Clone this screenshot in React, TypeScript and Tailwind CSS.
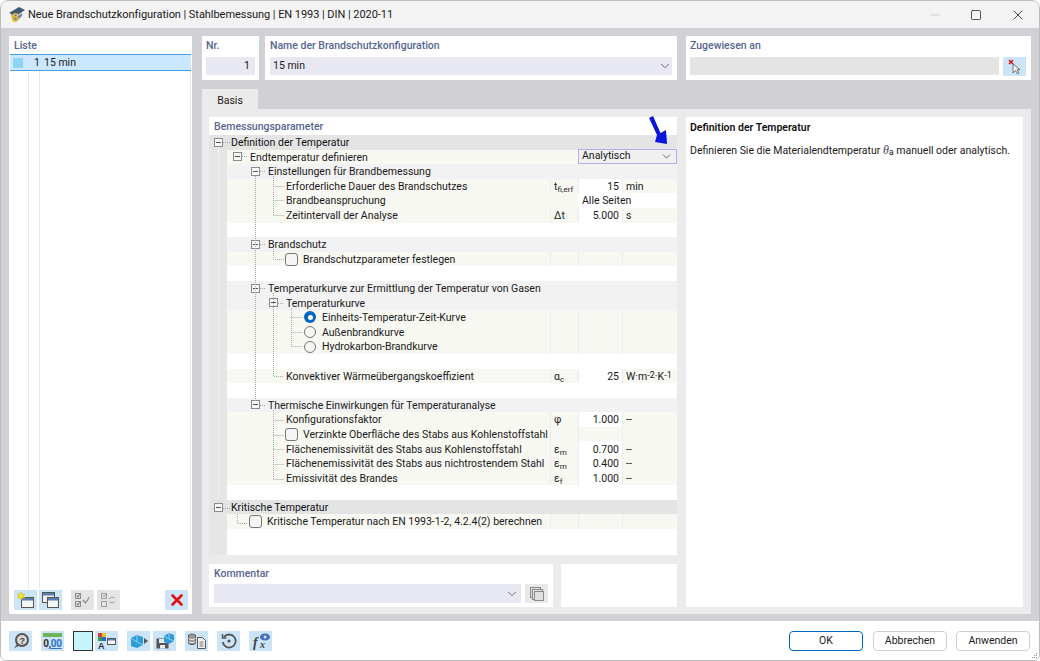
import { FC, ReactNode } from "react";
import { ChevronDown, Minus, Square, X } from "lucide-react";

const Box: FC = () => (
    <span className="w-[9px] h-[9px] shrink-0 border border-[#8a8a8a] bg-[#f6f6f6] flex items-center justify-center">
        <span className="w-[5px] h-px bg-[#555555]" />
    </span>
);

const Check: FC = () => (
    <span className="w-[13px] h-[13px] shrink-0 rounded-[3px] border border-[#767676] bg-[#f5f5f5]" />
);

const Radio: FC<{ on?: boolean }> = ({ on }) =>
    on ? (
        <span className="w-[12px] h-[12px] shrink-0 rounded-full bg-[#0067c0] flex items-center justify-center">
            <span className="w-[5px] h-[5px] rounded-full bg-white" />
        </span>
    ) : (
        <span className="w-[12px] h-[12px] shrink-0 rounded-full border border-[#767676] bg-[#f5f5f5]" />
    );

type RowProps = {
    pad: string;
    box?: boolean;
    check?: boolean;
    radio?: "on" | "off";
    label: string;
    tone: "cream" | "head" | "blank";
    sym?: ReactNode;
    value?: string;
    unit?: ReactNode;
    cells?: boolean;
};

const Row: FC<RowProps> = ({ pad, box, check, radio, label, tone, sym, value, unit, cells }) => {
    const bg = tone === "cream" ? "bg-[#f8f8f3]" : tone === "head" ? "bg-[#f2f2f2]" : "bg-white";
    return (
        <div className="flex h-[14.6px] shrink-0 leading-none">
            <div className="w-[18px] shrink-0 bg-[#e6e6e6]" />
            <div className={`flex-1 flex min-w-0 ${bg}`}>
                <div className={`flex-1 flex items-center min-w-0 whitespace-nowrap ${pad}`}>
                    {box && <Box />}
                    {check && <Check />}
                    {radio && <Radio on={radio === "on"} />}
                    <span className={`block pt-[2px] ${box ? "ml-[8px]" : check ? "ml-[5px]" : radio ? "ml-[6px]" : ""}`}>{label}</span>
                </div>
                {cells && (
                    <>
                        <div className="w-[28px] shrink-0 border-l border-[#ececec] pl-[3px] pt-[2px] flex items-center">{sym}</div>
                        <div className={`w-[44px] shrink-0 border-l border-[#ececec] pr-[3px] pt-[2px] flex items-center justify-end ${value ? "bg-white" : ""}`}>
                            {value}
                        </div>
                        <div className="w-[55px] shrink-0 border-l border-[#ececec] pl-[3px] pt-[2px] flex items-center">{unit}</div>
                    </>
                )}
            </div>
        </div>
    );
};

const Group: FC<{ label: string }> = ({ label }) => (
    <div className="flex h-[14.6px] shrink-0 items-center bg-[#e4e4e4] pl-[5px] leading-none text-[#111111]">
        <Box />
        <span className="block pt-[2px] ml-[8px]">{label}</span>
    </div>
);

const Sym: FC<{ b: string; s?: string }> = ({ b, s }) => (
    <span className="whitespace-nowrap text-[#222222]">
        {b}
        {s && <span className="relative top-[2px] text-[8px]">{s}</span>}
    </span>
);

const Dots: FC = () => (
    <svg className="absolute left-0 top-0 pointer-events-none" width="468" height="420" fill="none" stroke="#a8a8a8" strokeDasharray="1 1">
        <path d="M9.5 12V363" stroke="#f8f8f8" />
        <path d="M14 7.5H21M33 21.5H39M51 36.5H57M51 109.5H57M51 153.5H57M69 168.5H75M51 270.5H57M14 373.5H21" />
        <path d="M46.5 41V266" />
        <path d="M64.5 41V80.5M64.5 51.5H75M64.5 65.5H75M64.5 80.5H75" />
        <path d="M64.5 114V124.5H75" />
        <path d="M64.5 158V241.5H75" />
        <path d="M82.5 173V211.5M82.5 182.5H94M82.5 197.5H94M82.5 211.5H94" />
        <path d="M64.5 275V344.5M64.5 285.5H75M64.5 300.5H75M64.5 314.5H75M64.5 329.5H75M64.5 344.5H75" />
        <path d="M28.5 379V388.5H39" />
    </svg>
);

const TBtn: FC<{ children: ReactNode; off?: boolean; cls?: string }> = ({ children, off, cls }) => (
    <div className={`w-[23px] h-[20px] shrink-0 flex items-center justify-center ${off ? "bg-[#e4e4e4]" : "bg-[#cce4f7]"} ${cls ?? ""}`}>
        {children}
    </div>
);

const NewIcon: FC = () => (
    <svg width="19" height="18" viewBox="0 0 19 18">
        <rect x="5.5" y="6.5" width="12" height="10" fill="#f4f4f4" stroke="#555" />
        <rect x="6" y="7" width="11" height="2.5" fill="#5a7fb5" />
        <path d="M5 1l1 2.5 2.6-.6-1.4 2.2 1.8 1.9-2.6-.3L5 9 3.9 6.700l-2.600.3 1.800-1.900L1.700 2.900l2.300.6z" fill="#f7e62c" stroke="#c8b400" strokeWidth=".5" />
    </svg>
);

const CopyWinIcon: FC = () => (
    <svg width="19" height="18" viewBox="0 0 19 18">
        <rect x="1.5" y="1.5" width="12" height="10" fill="#f0f0f0" stroke="#555" />
        <rect x="2" y="2" width="11" height="2.5" fill="#5a7fb5" />
        <rect x="6.5" y="6.5" width="11" height="10" fill="#f4f4f4" stroke="#555" />
        <rect x="7" y="7" width="10" height="2.5" fill="#5a7fb5" />
    </svg>
);

const CheckAllIcon: FC = () => (
    <svg width="19" height="18" viewBox="0 0 19 18" fill="none" stroke="#8c8c8c">
        <rect x="2.5" y="2.5" width="5" height="5" />
        <rect x="2.5" y="10.5" width="5" height="5" />
        <path d="M3.500 12.500l1.500 1.500 2-3M3.500 4.500l1.500 1.500 2-3M10 9l2.500 3 4-6" strokeWidth="1.2" />
    </svg>
);

const CheckSwapIcon: FC = () => (
    <svg width="19" height="18" viewBox="0 0 19 18" fill="none" stroke="#a0a0a0">
        <rect x="2.5" y="2.5" width="5" height="5" />
        <rect x="2.5" y="10.5" width="5" height="5" />
        <path d="M3.500 4.500l1.500 1.500 2-3M10 8c1-2 4-2 6-1M16 11c-2 1-4 1-6 0" />
    </svg>
);

const HelpIcon: FC = () => (
    <svg width="20" height="18" viewBox="0 0 20 18">
        <circle cx="11" cy="8" r="6" fill="#d8d8d8" stroke="#555" strokeWidth="2" />
        <path d="M6 12l-3 4 5-2" fill="#555" />
        <text x="8.500" y="11.500" fontSize="9" fontWeight="700" fill="#444" fontFamily="Liberation Sans, sans-serif">?</text>
    </svg>
);

const NumIcon: FC = () => (
    <div className="flex flex-col items-center leading-none">
        <div className="w-[19px] h-[4px] bg-[#71b35a] mb-[1px]" />
        <div className="text-[10px] font-bold leading-[11px] tracking-[-0.3px]">
            <span className="text-[#333333]">0,</span>
            <span className="text-[#2a6fc9] underline">00</span>
        </div>
    </div>
);

const LabelsIcon: FC = () => (
    <svg width="21" height="18" viewBox="0 0 21 18">
        <rect x="2" y="1" width="4" height="4" fill="#d93a3a" />
        <rect x="6" y="1" width="4" height="4" fill="#e8c52c" />
        <rect x="2" y="5" width="4" height="4" fill="#3a9b46" />
        <rect x="6" y="5" width="4" height="4" fill="#2c63c9" />
        <text x="2" y="17" fontSize="9" fontWeight="700" fill="#333" fontFamily="Liberation Sans, sans-serif">A</text>
        <rect x="11.5" y="6.5" width="8" height="6" fill="#f4f4f4" stroke="#555" />
        <rect x="12" y="7" width="7" height="1.5" fill="#5a7fb5" />
    </svg>
);

const CubeArrowIcon: FC = () => (
    <svg width="20" height="18" viewBox="0 0 20 18">
        <path d="M2 6l6-3 6 2v8l-6 3-6-2z" fill="#2f9bd6" />
        <path d="M8 3v7l6 3M2 6l6 4" fill="none" stroke="#8fd0ef" />
        <path d="M15 6l4 3-4 3z" fill="#555" />
    </svg>
);

const SaveIcon: FC = () => (
    <svg width="20" height="18" viewBox="0 0 20 18">
        <path d="M1.5 6.5h11l1 1v9h-12z" fill="#555" />
        <rect x="4" y="7" width="7" height="4" fill="#e8e8e8" />
        <rect x="5" y="13" width="5" height="3.5" fill="#e8e8e8" />
        <path d="M9 4l5-3 5 2v6l-5 3-5-2z" fill="#2f9bd6" />
        <path d="M14 1v6l5 2M9 4l5 3" fill="none" stroke="#8fd0ef" />
    </svg>
);

const DbDocIcon: FC = () => (
    <svg width="20" height="18" viewBox="0 0 20 18">
        <ellipse cx="5" cy="3" rx="3.5" ry="1.5" fill="#777" />
        <path d="M1.5 3v8c0 2 7 2 7 0V3" fill="#999" stroke="#555" />
        <path d="M1.5 6c0 2 7 2 7 0M1.5 9c0 2 7 2 7 0" fill="none" stroke="#eee" />
        <path d="M10.5 5.5h5l3 3v8h-8z" fill="#f4f4f4" stroke="#555" />
        <path d="M12.5 10h4M12.5 12h4M12.5 14h4" stroke="#777" />
    </svg>
);

const ResetIcon: FC = () => (
    <svg width="18" height="18" viewBox="0 0 18 18" fill="none" stroke="#555" strokeWidth="1.8">
        <path d="M4 5a6.5 6.5 0 1 1-1.300 5" />
        <path d="M2.5 2v4h4" strokeWidth="1.5" />
        <circle cx="9" cy="9" r="1.6" fill="#555" stroke="none" />
    </svg>
);

const FormulaIcon: FC = () => (
    <svg width="20" height="18" viewBox="0 0 20 18">
        <text x="2" y="15" fontSize="14" fontStyle="italic" fontWeight="700" fill="#444" fontFamily="Liberation Serif, serif">f</text>
        <text x="9" y="16" fontSize="10" fontStyle="italic" fontWeight="700" fill="#444" fontFamily="Liberation Serif, serif">x</text>
        <ellipse cx="14" cy="5" rx="5" ry="3.5" fill="#3f6fc4" />
        <circle cx="14" cy="5" r="1.5" fill="#dfe9f7" />
    </svg>
);

const Btn: FC<{ label: string; primary?: boolean }> = ({ label, primary }) => (
    <div className={`w-[74px] h-[20px] rounded-[4px] border bg-white flex items-center justify-center ${primary ? "border-[#0067c0] mr-px" : "border-[#d0d0d0]"}`}>
        {label}
    </div>
);

const PanelTitle: FC<{ children: ReactNode }> = ({ children }) => (
    <div className="h-[18px] text-[#56658f] font-medium leading-[20px]">{children}</div>
);

export default function App() {
    return (
        <div
            className="relative w-[1040px] h-[661px] flex flex-col overflow-hidden rounded-t-[8px] rounded-b-[6px] border border-[#bdbdbd] bg-white text-[10.5px] text-[#1a1a1a]"
            style={{ fontFamily: "Roboto, sans-serif" }}
        >
            {/* title bar */}
            <div className="h-[27px] shrink-0 flex items-center bg-[#f3f3f3] pl-[7px]">
                <svg width="18" height="18" viewBox="0 0 18 18">
                    <path d="M1 7l10-6 6 3-9 6z" fill="#3f5873" />
                    <path d="M3 8l5 3 6-4v3l-4 4H5z" fill="#74879b" />
                    <text x="3.5" y="15.5" fontSize="13" fontWeight="700" fill="#e8b923" fontFamily="Liberation Sans, sans-serif">6</text>
                </svg>
                <span className="ml-[2px] text-[11px] tracking-[-0.05px] pt-px">Neue Brandschutzkonfiguration | Stahlbemessung | EN 1993 | DIN | 2020-11</span>
                <div className="ml-auto flex items-center gap-[28px] pr-[13px]">
                    <Minus size={14} strokeWidth={1} className="text-[#b8b8b8]" />
                    <Square size={12} strokeWidth={1.5} className="text-[#222222]" />
                    <X size={16} strokeWidth={1.2} className="text-[#222222]" />
                </div>
            </div>

            {/* main */}
            <div className="flex-1 min-h-0 flex gap-[10px] bg-[#d0d0d5] pt-[8px] pb-[7px] pl-[8px] pr-[8px]">
                {/* list */}
                <div className="w-[183px] shrink-0 flex flex-col bg-white">
                    <div className="pl-[5px]">
                        <PanelTitle>Liste</PanelTitle>
                    </div>
                    <div className="ml-px mr-[1px] h-[17px] flex items-center bg-[#cce8ff] border-y border-[#4a9fe0] pt-px">
                        <div className="w-[19px] pl-[3px]">
                            <div className="w-[10px] h-[10px] bg-[#8dd4f5]" />
                        </div>
                        <div className="w-[11px] text-right">1</div>
                        <div className="pl-[4px]">15 min</div>
                    </div>
                    <div className="ml-px mr-[1px] flex-1 flex border-r border-[#e8e8e8]">
                        <div className="w-[19px] border-r border-[#e8e8e8]" />
                        <div className="w-[11px] border-r border-[#e8e8e8]" />
                    </div>
                    <div className="flex items-center h-[26px] pl-[5px] pr-[4px] pb-[3px]">
                        <TBtn><NewIcon /></TBtn>
                        <TBtn cls="ml-[2px]"><CopyWinIcon /></TBtn>
                        <TBtn off cls="ml-[9px]"><CheckAllIcon /></TBtn>
                        <TBtn off cls="ml-[3px]"><CheckSwapIcon /></TBtn>
                        <TBtn cls="ml-auto"><X size={18} strokeWidth={3.5} className="text-[#e01010]" /></TBtn>
                    </div>
                </div>

                {/* right column */}
                <div className="flex-1 min-w-0 flex flex-col">
                    <div className="h-[44px] shrink-0 flex">
                        <div className="w-[57px] bg-white px-[4px]">
                            <PanelTitle>Nr.</PanelTitle>
                            <div className="h-[18px] mt-[3px] bg-[#e8e8f2] flex items-center justify-end pr-[5px]">1</div>
                        </div>
                        <div className="w-[412px] ml-[6px] bg-white px-[5px]">
                            <PanelTitle>Name der Brandschutzkonfiguration</PanelTitle>
                            <div className="h-[18px] mt-[3px] bg-[#e8e8f2] flex items-center justify-between pl-[3px]">
                                <span>15 min</span>
                                <ChevronDown size={14} strokeWidth={1.3} className="text-[#444444]" />
                            </div>
                        </div>
                        <div className="flex-1 ml-[9px] bg-white pl-[4px] pr-[5px]">
                            <PanelTitle>Zugewiesen an</PanelTitle>
                            <div className="mt-[3px] flex gap-[4px]">
                                <div className="flex-1 h-[18px] bg-[#e4e4e4]" />
                                <div className="w-[23px] h-[19px] bg-[#cce4f7] flex items-center justify-center">
                                    <svg width="16" height="16" viewBox="0 0 16 16">
                                        <path d="M6 5v9l2.500-2.500 2 3.500 1.500-1-2-3.300H13z" fill="#f4f4f4" stroke="#555" strokeWidth=".8" />
                                        <path d="M2 1l4 4M6 1L2 5" stroke="#e01010" strokeWidth="1.5" />
                                    </svg>
                                </div>
                            </div>
                        </div>
                    </div>

                    <div className="mt-[9px] w-[56px] h-[20px] shrink-0 bg-[#ebebeb] flex items-center justify-center pt-[3px]">Basis</div>

                    <div className="flex-1 min-h-0 flex gap-[9px] bg-[#ebebeb] pt-[8px] pb-[7px] pl-[7px] pr-[8px]">
                        <div className="w-[468px] shrink-0 flex flex-col">
                            <div className="h-[438px] shrink-0 flex flex-col bg-white">
                                <div className="h-[18px] shrink-0 pl-[5px]">
                                    <PanelTitle>Bemessungsparameter</PanelTitle>
                                </div>
                                <div className="relative flex-1 min-h-0 flex flex-col">
                                    <Group label="Definition der Temperatur" />
                                    <div className="relative">
                                        <Row pad="pl-[6px]" box label="Endtemperatur definieren" tone="cream" />
                                        <div className="absolute right-0 top-[-1px] w-[99px] h-[15px] bg-[#f0f0f0] border border-[#b0b0ee] flex items-center justify-between pl-[3px] pr-[3px]">
                                            <span>Analytisch</span>
                                            <ChevronDown size={13} strokeWidth={1.4} className="text-[#444444]" />
                                        </div>
                                    </div>
                                    <Row pad="pl-[24px]" box label="Einstellungen für Brandbemessung" tone="head" />
                                    <Row pad="pl-[59px]" label="Erforderliche Dauer des Brandschutzes" tone="cream" cells sym={<Sym b="t" s="fi,erf" />} value="15" unit="min" />
                                    <div className="flex h-[14.6px] shrink-0 leading-none">
                                        <div className="w-[18px] shrink-0 bg-[#e6e6e6]" />
                                        <div className="flex-1 flex items-center bg-[#f8f8f3] pl-[59px] pt-[2px]">Brandbeanspruchung</div>
                                        <div className="w-[99px] shrink-0 bg-white pl-[4px] pt-[2px] flex items-center">Alle Seiten</div>
                                    </div>
                                    <Row pad="pl-[59px]" label="Zeitintervall der Analyse" tone="cream" cells sym={<Sym b="Δt" />} value="5.000" unit="s" />
                                    <Row pad="" label="" tone="blank" />
                                    <Row pad="pl-[24px]" box label="Brandschutz" tone="head" />
                                    <Row pad="pl-[58px]" check label="Brandschutzparameter festlegen" tone="cream" cells />
                                    <Row pad="" label="" tone="blank" />
                                    <Row pad="pl-[24px]" box label="Temperaturkurve zur Ermittlung der Temperatur von Gasen" tone="head" />
                                    <Row pad="pl-[42px]" box label="Temperaturkurve" tone="head" />
                                    <Row pad="pl-[77px]" radio="on" label="Einheits-Temperatur-Zeit-Kurve" tone="cream" cells />
                                    <Row pad="pl-[77px]" radio="off" label="Außenbrandkurve" tone="cream" cells />
                                    <Row pad="pl-[77px]" radio="off" label="Hydrokarbon-Brandkurve" tone="cream" cells />
                                    <Row pad="" label="" tone="blank" />
                                    <Row
                                        pad="pl-[59px]"
                                        label="Konvektiver Wärmeübergangskoeffizient"
                                        tone="cream"
                                        cells
                                        sym={<Sym b="α" s="c" />}
                                        value="25"
                                        unit={
                                            <span className="whitespace-nowrap">
                                                W·m<span className="relative top-[-2px] text-[9px]">-2</span>·K<span className="relative top-[-2px] text-[9px]">-1</span>
                                            </span>
                                        }
                                    />
                                    <Row pad="" label="" tone="blank" />
                                    <Row pad="pl-[24px]" box label="Thermische Einwirkungen für Temperaturanalyse" tone="head" />
                                    <Row pad="pl-[59px]" label="Konfigurationsfaktor" tone="cream" cells sym={<Sym b="φ" />} value="1.000" unit="--" />
                                    <Row pad="pl-[58px]" check label="Verzinkte Oberfläche des Stabs aus Kohlenstoffstahl" tone="cream" cells />
                                    <Row pad="pl-[59px]" label="Flächenemissivität des Stabs aus Kohlenstoffstahl" tone="cream" cells sym={<Sym b="ε" s="m" />} value="0.700" unit="--" />
                                    <Row pad="pl-[59px]" label="Flächenemissivität des Stabs aus nichtrostendem Stahl" tone="cream" cells sym={<Sym b="ε" s="m" />} value="0.400" unit="--" />
                                    <Row pad="pl-[59px]" label="Emissivität des Brandes" tone="cream" cells sym={<Sym b="ε" s="f" />} value="1.000" unit="--" />
                                    <Row pad="" label="" tone="blank" />
                                    <Group label="Kritische Temperatur" />
                                    <Row pad="pl-[22px]" check label="Kritische Temperatur nach EN 1993-1-2, 4.2.4(2) berechnen" tone="cream" cells />
                                    <div className="flex-1 flex">
                                        <div className="w-[18px] bg-[#e6e6e6]" />
                                    </div>
                                    <Dots />
                                    <svg className="absolute left-[438px] top-[-21px] pointer-events-none" width="24" height="36" viewBox="0 0 24 36">
                                        <path d="M2 4L6 2L13.5 19L19 16L20 30L8 28L10 21Z" fill="#0a14dc" />
                                    </svg>
                                </div>
                            </div>
                            <div className="mt-[9px] flex-1 flex gap-[8px]">
                                <div className="w-[344px] bg-white px-[5px]">
                                    <PanelTitle>Kommentar</PanelTitle>
                                    <div className="mt-[2px] flex gap-[4px]">
                                        <div className="flex-1 h-[19px] bg-[#e8e8f2] flex items-center justify-end pr-[2px]">
                                            <ChevronDown size={14} strokeWidth={1.3} className="text-[#444444]" />
                                        </div>
                                        <div className="w-[23px] h-[19px] bg-[#e8e8e8] flex items-center justify-center">
                                            <svg width="16" height="16" viewBox="0 0 16 16" fill="#e0e0e0" stroke="#8a8a8a">
                                                <rect x="1.5" y="1.5" width="10" height="10" />
                                                <rect x="3.5" y="3.5" width="10" height="10" />
                                                <rect x="5.5" y="5.5" width="9" height="9" />
                                            </svg>
                                        </div>
                                    </div>
                                </div>
                                <div className="flex-1 bg-white" />
                            </div>
                        </div>

                        <div className="flex-1 bg-white px-[4px]">
                            <div className="mt-[3px] font-semibold leading-[15px] text-[#111111]">Definition der Temperatur</div>
                            <div className="mt-[8px] leading-[15px] whitespace-nowrap">
                                Definieren Sie die Materialendtemperatur <i className="text-[12px] text-[#444466]" style={{ fontFamily: '"Liberation Serif", serif' }}>θ</i>
                                <span className="relative top-[1px] text-[9px]">a</span> manuell oder analytisch.
                            </div>
                        </div>
                    </div>
                </div>
            </div>

            {/* bottom bar */}
            <div className="relative h-[39px] shrink-0 flex items-center bg-white pl-[8px] pr-[9px]">
                <TBtn><HelpIcon /></TBtn>
                <TBtn cls="ml-[9px]"><NumIcon /></TBtn>
                <div className="ml-[9px] w-[20px] h-[20px] shrink-0 bg-[#c5f5fb] border border-[#333333]" />
                <TBtn cls="ml-[2px]"><LabelsIcon /></TBtn>
                <TBtn cls="ml-[9px]"><CubeArrowIcon /></TBtn>
                <TBtn cls="ml-[3px]"><SaveIcon /></TBtn>
                <TBtn cls="ml-[9px]"><DbDocIcon /></TBtn>
                <TBtn cls="ml-[9px]"><ResetIcon /></TBtn>
                <TBtn cls="ml-[9px]"><FormulaIcon /></TBtn>
                <div className="ml-auto flex gap-[9px]">
                    <Btn primary label="OK" />
                    <Btn label="Abbrechen" />
                    <Btn label="Anwenden" />
                </div>
                <svg className="absolute right-0 bottom-0" width="8" height="8" viewBox="0 0 8 8" fill="#999">
                    <rect x="5" y="1" width="1" height="1" />
                    <rect x="3" y="3" width="1" height="1" />
                    <rect x="5" y="3" width="1" height="1" />
                    <rect x="1" y="5" width="1" height="1" />
                    <rect x="3" y="5" width="1" height="1" />
                    <rect x="5" y="5" width="1" height="1" />
                </svg>
            </div>
        </div>
    );
}
